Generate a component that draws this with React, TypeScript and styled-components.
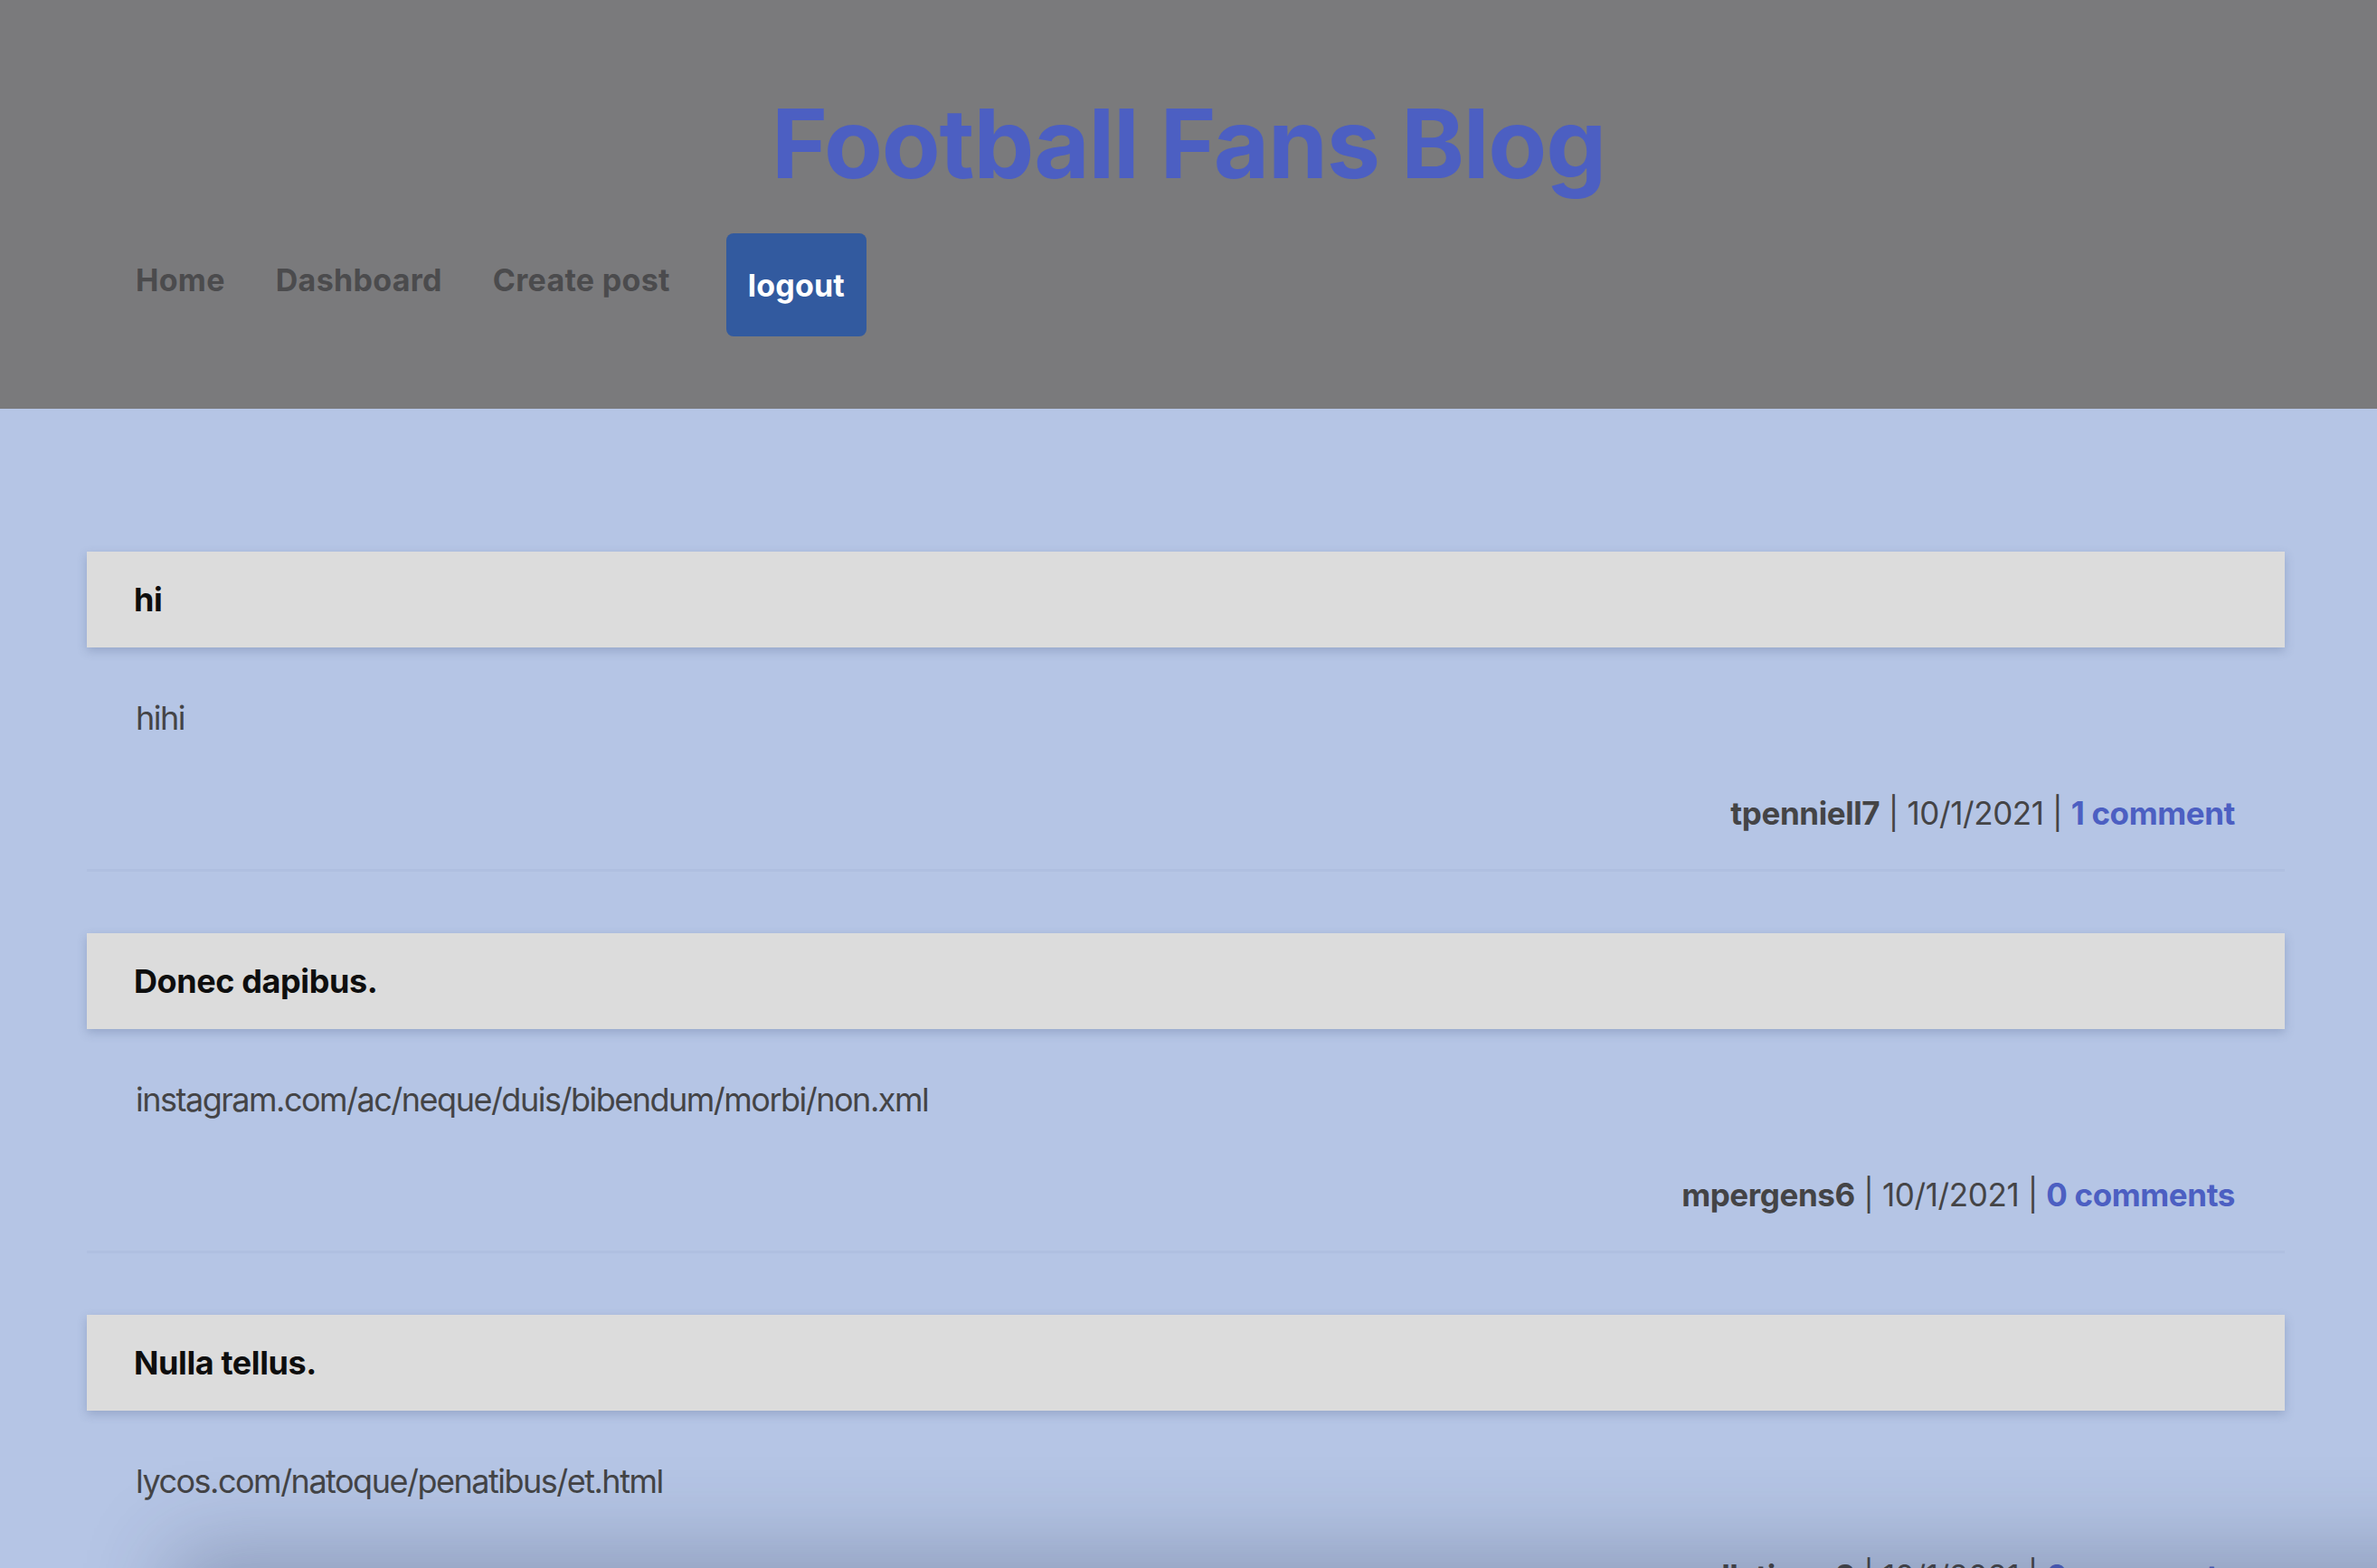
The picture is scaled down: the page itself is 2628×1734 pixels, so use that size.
import React from "react";
import styled, { createGlobalStyle } from "styled-components";

const GlobalStyle = createGlobalStyle`
  html, body {
    margin: 0;
    padding: 0;
    background: #b5c5e5;
    font-family: Inter, "Noto Sans", "Liberation Sans", sans-serif;
  }
  * { box-sizing: border-box; }
`;

const Header = styled.header`
  background: #7a7a7c;
  height: 452px;
  padding-top: 95px;
  display: flex;
  flex-direction: column;
`;

const Title = styled.h1`
  margin: 0;
  text-align: center;
  font-size: 106px;
  line-height: 128px;
  font-weight: 700;
  letter-spacing: -1.2px;
  color: #4c5fc2;
`;

const Nav = styled.nav`
  display: flex;
  align-items: flex-start;
  margin-top: 35px;
  padding-left: 150px;
`;

const NavLink = styled.a`
  font-size: 34px;
  line-height: 41px;
  font-weight: 700;
  letter-spacing: 0.3px;
  color: #4b4b4d;
  text-decoration: none;
  margin-top: 31px;
  margin-right: 56px;
`;

const LogoutButton = styled.button`
  margin-left: 6px;
  height: 114px;
  padding: 0 24px;
  border: none;
  border-radius: 8px;
  background: #325a9f;
  color: #ffffff;
  font-family: inherit;
  font-size: 34px;
  font-weight: 700;
  letter-spacing: 0.2px;
  cursor: pointer;
`;

const Main = styled.main`
  padding: 158px 102px 200px 96px;
  display: flex;
  flex-direction: column;
`;

const Post = styled.article`
  display: flex;
  flex-direction: column;
  border-bottom: 3px solid #afbfe0;
  margin-bottom: 68px;
  padding-bottom: 40px;
`;

const PostHeader = styled.div`
  height: 106px;
  display: flex;
  align-items: center;
  padding: 0 52px;
  background: #dcdcdc;
  box-shadow: 0 4px 10px rgba(60, 80, 120, 0.25);
  font-size: 36px;
  font-weight: 700;
  letter-spacing: -0.4px;
  color: #0e0e0e;
`;

const PostBody = styled.p`
  margin: 56px 0 0;
  padding: 0 54px;
  font-size: 36px;
  line-height: 44px;
  letter-spacing: -1.5px;
  color: #444446;
`;

const PostMeta = styled.div`
  margin-top: 61px;
  padding: 0 55px;
  text-align: right;
  font-size: 35px;
  line-height: 44px;
  letter-spacing: -0.4px;
  color: #444446;
`;

const Author = styled.strong`
  font-weight: 700;
`;

const CommentLink = styled.a`
  font-weight: 700;
  color: #4c5fc2;
  text-decoration: none;
`;

const BottomShade = styled.div`
  position: fixed;
  left: 210px;
  right: -200px;
  top: 100%;
  height: 300px;
  box-shadow: 0 0 90px 20px rgba(40, 50, 80, 0.28);
  pointer-events: none;
`;

const posts = [
  { title: "hi", body: "hihi", author: "tpenniell7", date: "10/1/2021", comments: 1 },
  {
    title: "Donec dapibus.",
    body: "instagram.com/ac/neque/duis/bibendum/morbi/non.xml",
    author: "mpergens6",
    date: "10/1/2021",
    comments: 0,
  },
  {
    title: "Nulla tellus.",
    body: "lycos.com/natoque/penatibus/et.html",
    author: "dlatimer3",
    date: "10/1/2021",
    comments: 0,
  },
];

export default function App() {
  return (
    <>
      <GlobalStyle />
      <Header>
        <Title>Football Fans Blog</Title>
        <Nav>
          <NavLink href="#">Home</NavLink>
          <NavLink href="#">Dashboard</NavLink>
          <NavLink href="#">Create post</NavLink>
          <LogoutButton>logout</LogoutButton>
        </Nav>
      </Header>
      <Main>
        {posts.map((p) => (
          <Post key={p.title}>
            <PostHeader>{p.title}</PostHeader>
            <PostBody>{p.body}</PostBody>
            <PostMeta>
              <Author>{p.author}</Author> | {p.date} |{" "}
              <CommentLink href="#">
                {p.comments} {p.comments === 1 ? "comment" : "comments"}
              </CommentLink>
            </PostMeta>
          </Post>
        ))}
      </Main>
      <BottomShade />
    </>
  );
}
